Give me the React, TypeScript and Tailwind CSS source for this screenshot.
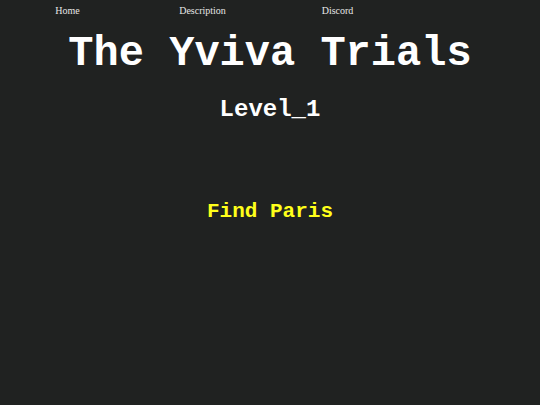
import React from 'react';

const LINKS = ['Home', 'Description', 'Discord'];

export default function App() {
  return (
    <div className="min-h-[405px] w-full bg-[#202221] text-white">
      <nav className="flex h-[21px] items-center">
        {LINKS.map(link => (
          <a
            key={link}
            href="#"
            className="w-[135px] text-center text-[10px] text-[#e6e6e6] [font-family:'Liberation_Serif',serif]"
          >
            {link}
          </a>
        ))}
      </nav>
      <div className="flex flex-col items-center [font-family:'Courier_New',Courier,'Liberation_Mono',monospace] font-bold">
        <h1 className="mt-[12px] text-[42px] leading-[42px]">The Yviva Trials</h1>
        <h2 className="mt-[21px] text-[24px] leading-[28px]">Level_1</h2>
        <p className="mt-[76px] text-[21px] leading-[24px] text-[#ffff1a]">Find Paris</p>
      </div>
    </div>
  );
}
